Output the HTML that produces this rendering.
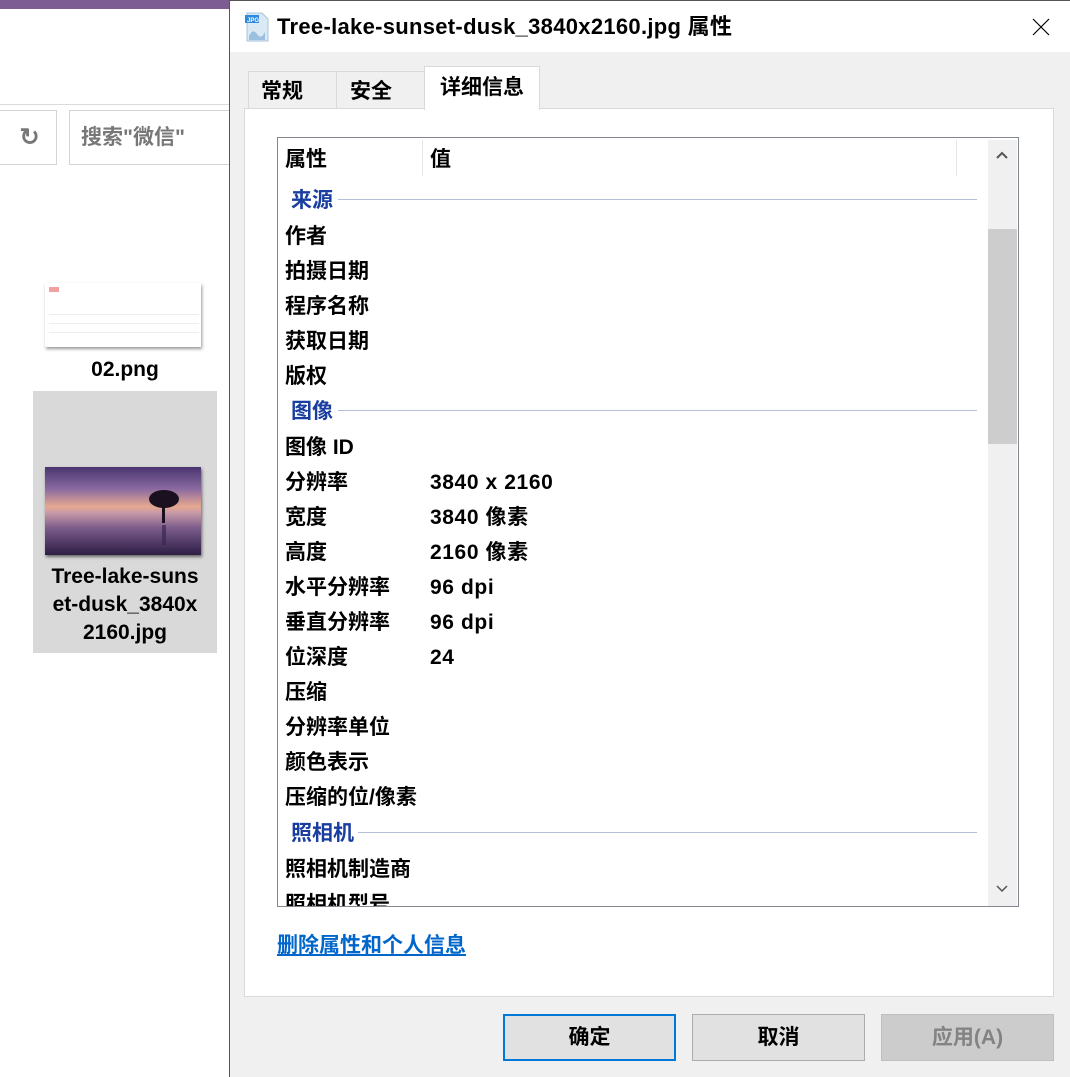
<!DOCTYPE html>
<html><head><meta charset="utf-8"><style>
*{margin:0;padding:0;box-sizing:border-box}
body{width:1070px;height:1077px;position:relative;overflow:hidden;background:#fff;font-family:"Liberation Sans","Noto Sans CJK SC",sans-serif;font-weight:bold;color:#000}
.a{position:absolute}
.r{position:absolute;left:285px;height:35px;line-height:35px;font-size:21px;white-space:nowrap}
.v{position:absolute;left:430px;height:35px;line-height:35px;font-size:21px;white-space:nowrap;letter-spacing:0.6px}
.g{position:absolute;left:291px;height:30px;line-height:30px;font-size:21px;color:#1a3ea0}
.gl{position:absolute;height:1px;background:#b4bfdc}
.btn{position:absolute;top:1014px;width:173px;height:47px;border:1px solid #adadad;background:#e1e1e1;font-size:21px;text-align:center;line-height:45px}
</style></head><body>
<div class="a" style="left:0;top:0;width:230px;height:9px;background:#7d5c93"></div>
<div class="a" style="left:0;top:104px;width:230px;height:1px;background:#dcdcdc"></div>
<div class="a" style="left:-2px;top:110px;width:59px;height:55px;border:1px solid #d4d4d4;color:#777;font-size:24px;text-align:center;line-height:53px;padding-left:4px">↻</div>
<div class="a" style="left:69px;top:110px;width:170px;height:55px;border:1px solid #d4d4d4;color:#777;font-size:21px;line-height:53px;padding-left:11px">搜索"微信"</div>
<div class="a" style="left:45px;top:283px;width:156px;height:64px;background:#fff;box-shadow:1px 2px 3px #999"></div>
<div class="a" style="left:49px;top:287px;width:10px;height:5px;background:#f3a0a0"></div>
<div class="a" style="left:49px;top:306px;width:150px;height:30px;background:repeating-linear-gradient(#fff 0 8px,#eee 8px 9px)"></div>
<div class="a" style="left:33px;top:355px;width:184px;height:30px;font-size:21px;text-align:center;line-height:30px">02.png</div>
<div class="a" style="left:33px;top:391px;width:184px;height:262px;background:#d9d9d9"></div>
<div class="a" style="left:45px;top:467px;width:156px;height:88px;box-shadow:1px 2px 3px #666;background:linear-gradient(#4a3570 0%,#8a6aa0 25%,#e6a890 45%,#c89aa8 52%,#7a5a8a 70%,#2d1e45 100%)"></div>
<svg class="a" style="left:140px;top:485px" width="45" height="65"><ellipse cx="24" cy="14" rx="15" ry="9" fill="#1a1020"/><rect x="22" y="18" width="3" height="20" fill="#1a1020"/><rect x="22" y="40" width="4" height="20" fill="#3a2850" opacity=".7"/></svg>
<div class="a" style="left:33px;top:563px;width:184px;font-size:21px;line-height:28px;text-align:center">Tree-lake-suns<br>et-dusk_3840x<br>2160.jpg</div>
<div class="a" style="left:229px;top:0;width:841px;height:1077px;background:#f0f0f0;border-left:1px solid #555;border-top:1px solid #555"></div>
<div class="a" style="left:230px;top:1px;width:840px;height:51px;background:#fff"></div>
<svg class="a" style="left:244px;top:12px" width="26" height="30"><path d="M3 1h15l6 6v22H3z" fill="#dbe9f5" stroke="#a9c4dd"/><rect x="1" y="3" width="14" height="8" fill="#2d8ae0"/><text x="3" y="10" font-size="6" fill="#fff" font-family="Liberation Sans">JPG</text><path d="M5 24q4-8 8-2t8-2v8H5z" fill="#9bc0e0"/></svg>
<div class="a" style="left:277px;top:12px;font-size:22px;line-height:30px;letter-spacing:0.3px">Tree-lake-sunset-dusk_3840x2160.jpg 属性</div>
<svg class="a" style="left:1032px;top:18px" width="18" height="18"><path d="M1 1L17 17M17 1L1 17" stroke="#000" stroke-width="1.2"/></svg>
<div class="a" style="left:248px;top:71px;width:89px;height:38px;border:1px solid #d9d9d9;background:#f0f0f0;font-size:21px;padding-left:12px;line-height:40px">常规</div>
<div class="a" style="left:336px;top:71px;width:89px;height:38px;border:1px solid #d9d9d9;background:#f0f0f0;font-size:21px;padding-left:13px;line-height:40px">安全</div>
<div class="a" style="left:244px;top:108px;width:810px;height:889px;background:#fff;border:1px solid #d9d9d9"></div>
<div class="a" style="left:424px;top:66px;width:116px;height:44px;border:1px solid #d9d9d9;border-bottom:none;background:#fff;font-size:21px;padding-left:15px;line-height:42px">详细信息</div>
<div class="a" style="left:277px;top:137px;width:742px;height:770px;border:1px solid #828790;background:#fff;overflow:hidden">
<div class="a" style="left:144px;top:2px;width:1px;height:36px;background:#e5e5e5"></div>
<div class="a" style="left:678px;top:2px;width:1px;height:36px;background:#e5e5e5"></div>
<div class="a" style="left:710px;top:2px;width:29px;height:766px;background:#f0f0f0"></div>
<div class="a" style="left:710px;top:91px;width:29px;height:215px;background:#cdcdcd"></div>
<svg class="a" style="left:717px;top:12px" width="14" height="10"><path d="M2 8L7 3L12 8" stroke="#555" stroke-width="2" fill="none"/></svg>
<svg class="a" style="left:717px;top:746px" width="14" height="10"><path d="M2 2L7 7L12 2" stroke="#555" stroke-width="1.5" fill="none"/></svg>
</div>
<div class="r" style="top:142px">属性</div><div class="v" style="top:142px">值</div>
<div class="g" style="top:186px">来源</div><div class="gl" style="left:338px;top:199px;width:639px"></div>
<div class="r" style="top:219px">作者</div>
<div class="r" style="top:254px">拍摄日期</div>
<div class="r" style="top:289px">程序名称</div>
<div class="r" style="top:324px">获取日期</div>
<div class="r" style="top:359px">版权</div>
<div class="g" style="top:397px">图像</div><div class="gl" style="left:338px;top:410px;width:639px"></div>
<div class="r" style="top:430px">图像 ID</div>
<div class="r" style="top:465px">分辨率</div><div class="v" style="top:465px">3840 x 2160</div>
<div class="r" style="top:500px">宽度</div><div class="v" style="top:500px">3840 像素</div>
<div class="r" style="top:535px">高度</div><div class="v" style="top:535px">2160 像素</div>
<div class="r" style="top:570px">水平分辨率</div><div class="v" style="top:570px">96 dpi</div>
<div class="r" style="top:605px">垂直分辨率</div><div class="v" style="top:605px">96 dpi</div>
<div class="r" style="top:640px">位深度</div><div class="v" style="top:640px">24</div>
<div class="r" style="top:675px">压缩</div>
<div class="r" style="top:710px">分辨率单位</div>
<div class="r" style="top:745px">颜色表示</div>
<div class="r" style="top:780px">压缩的位/像素</div>
<div class="g" style="top:819px">照相机</div><div class="gl" style="left:358px;top:832px;width:619px"></div>
<div class="r" style="top:852px">照相机制造商</div>
<div class="a" style="left:278px;top:887px;width:700px;height:19px;overflow:hidden"><div class="r" style="left:7px;top:0">照相机型号</div></div>
<div class="a" style="left:277px;top:931px;font-size:21px;color:#0066cc;text-decoration:underline;line-height:30px">删除属性和个人信息</div>
<div class="btn" style="left:503px;border:2px solid #0078d7;line-height:43px">确定</div>
<div class="btn" style="left:692px">取消</div>
<div class="btn" style="left:881px;background:#cccccc;border-color:#bfbfbf;color:#838383">应用(A)</div>
</body></html>
